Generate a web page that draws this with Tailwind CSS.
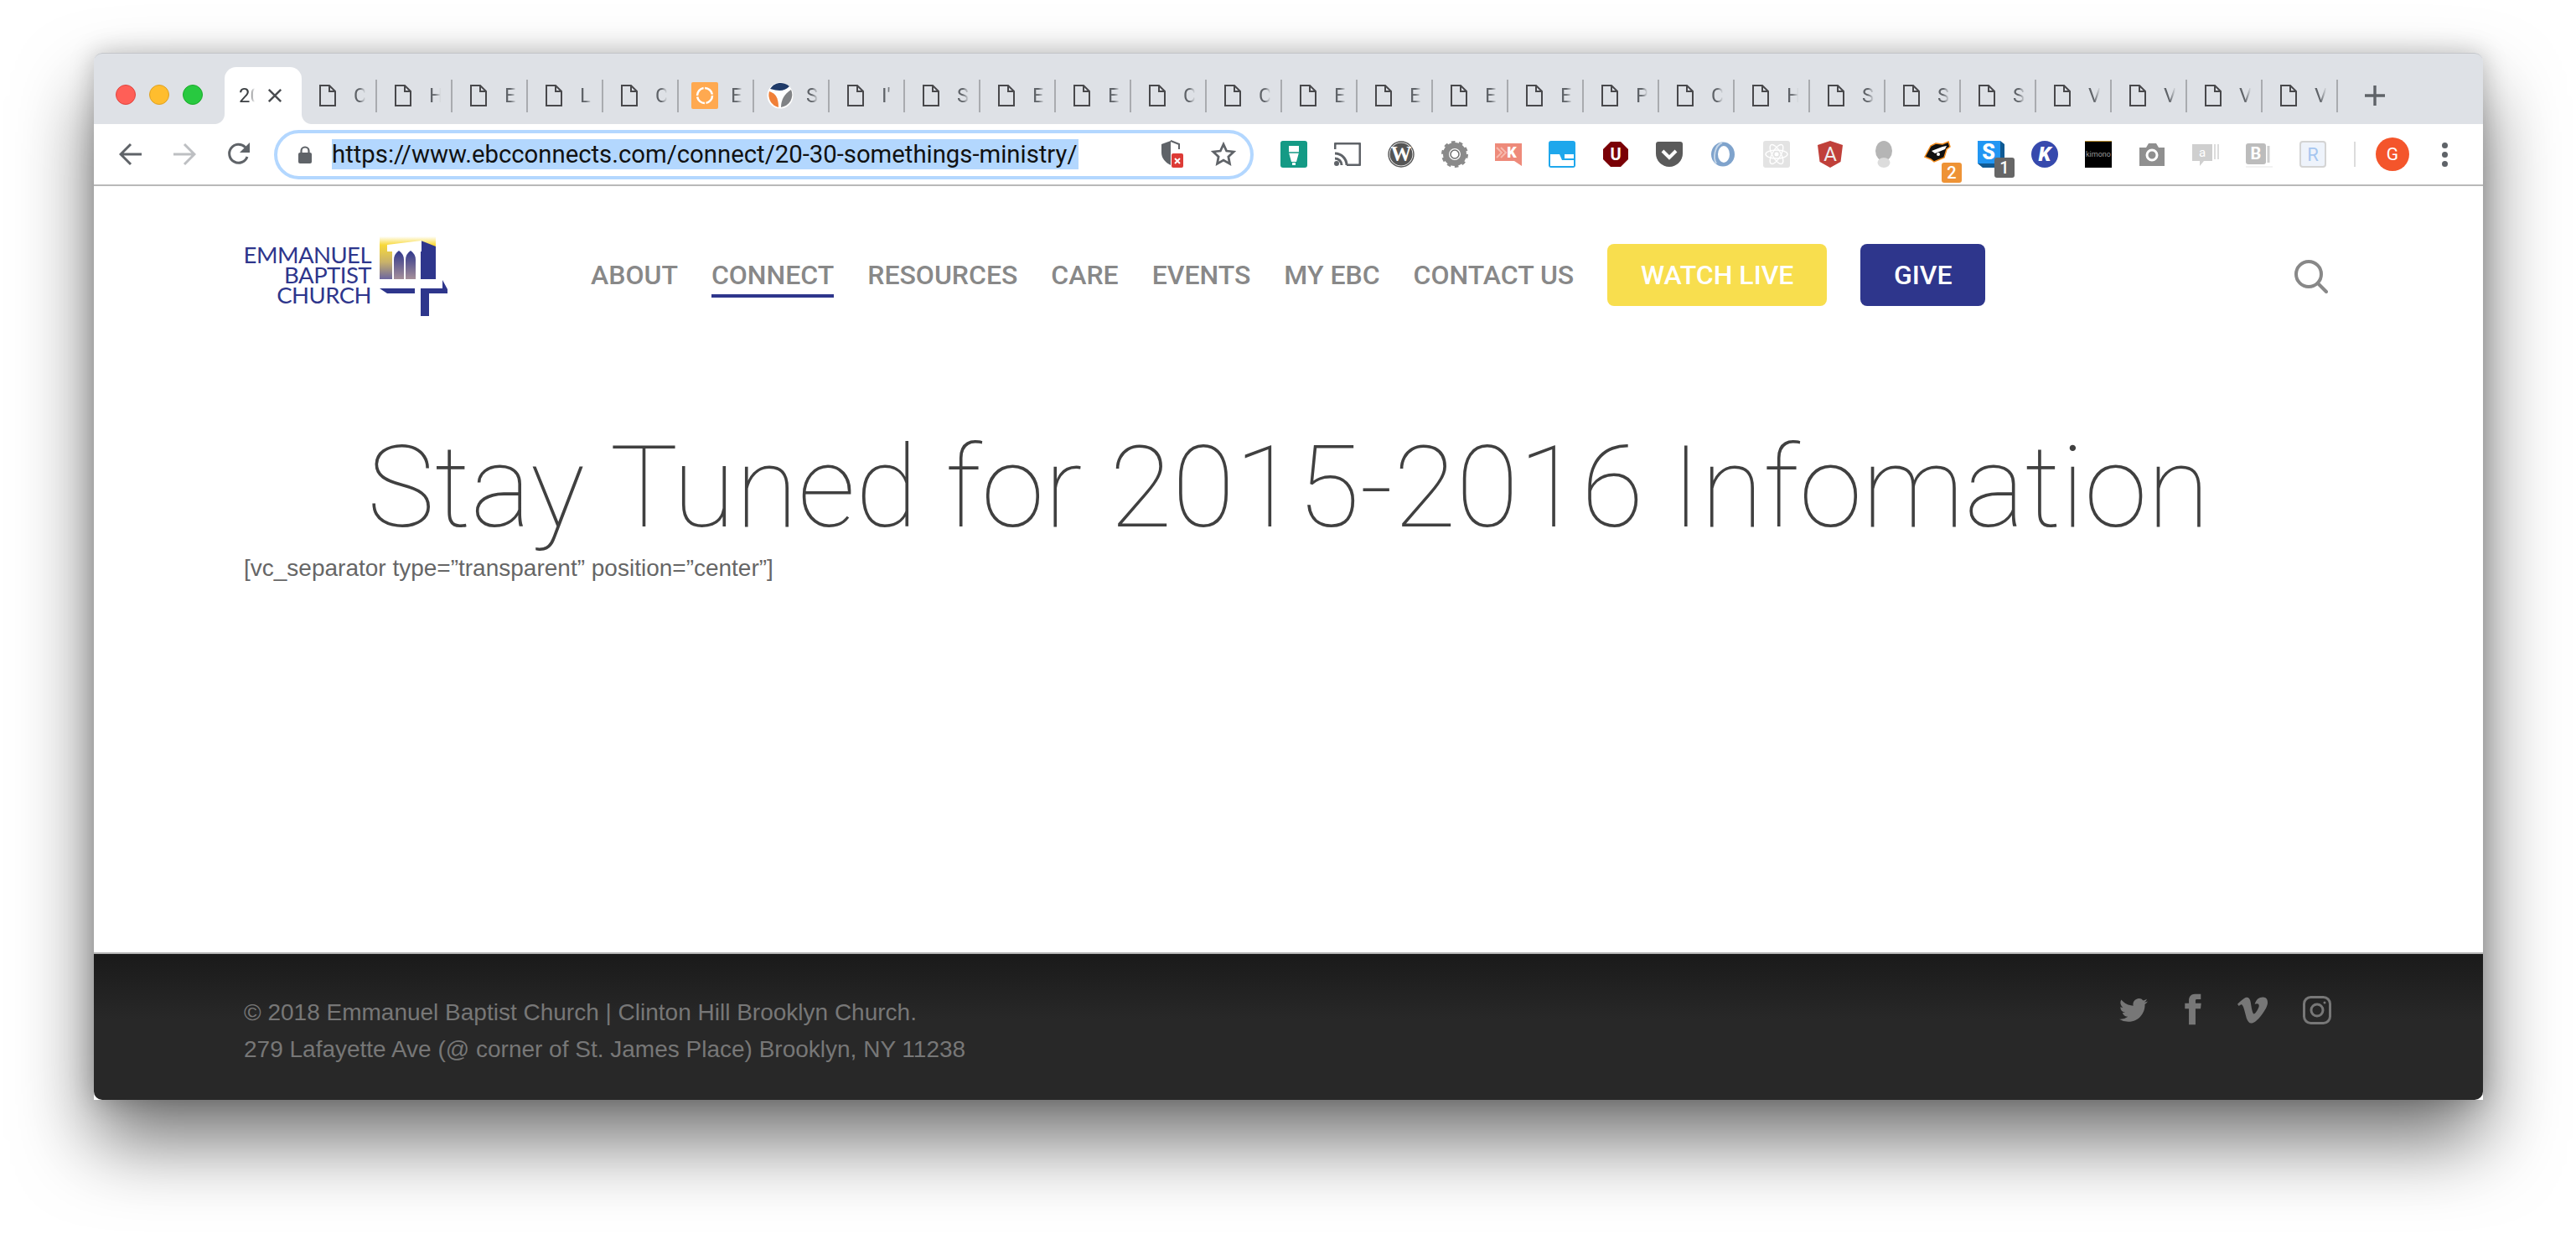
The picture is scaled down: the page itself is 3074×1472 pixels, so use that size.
<!DOCTYPE html>
<html lang="en">
<head>
  <meta charset="UTF-8">
  <title>20-30 Somethings Ministry</title>
  <script src="https://cdn.jsdelivr.net/npm/@tailwindcss/browser@4"></script>
</head>
<body class="bg-white w-[3074px] h-[1472px] overflow-hidden pl-[112px] pt-[63px] font-['Roboto',sans-serif]">

  <div class="w-[2851px] h-[1249px] rounded-[10px] flex flex-col bg-white shadow-[0_50px_90px_rgba(0,0,0,0.55),0_0_30px_rgba(0,0,0,0.22)]">

    <!-- tab strip -->
    <div class="h-[85px] bg-[#dee1e6] rounded-t-[10px] border-t border-[#c4c6ca] flex items-end pl-[26px] shrink-0">
      <div class="flex gap-[16px] self-center mb-[-14px]">
        <span class="w-[24px] h-[24px] rounded-full bg-[#ff5f57] border border-[#e0443e]"></span>
        <span class="w-[24px] h-[24px] rounded-full bg-[#ffbd2e] border border-[#dea123]"></span>
        <span class="w-[24px] h-[24px] rounded-full bg-[#28c940] border border-[#1aab29]"></span>
      </div>
      <div class="relative ml-[26px] w-[92px] h-[68px] bg-white rounded-t-[14px] flex items-center pl-[17px] shrink-0">
        <span class="absolute bottom-0 -left-[12px] w-[12px] h-[12px] bg-[radial-gradient(circle_at_0_0,#dee1e6_11.5px,#fff_12.5px)]"></span>
        <span class="absolute bottom-0 -right-[12px] w-[12px] h-[12px] bg-[radial-gradient(circle_at_100%_0,#dee1e6_11.5px,#fff_12.5px)]"></span>
        <span class="w-[19px] overflow-hidden text-[24px] text-[#3c4043] whitespace-nowrap [mask-image:linear-gradient(90deg,#000_60%,transparent)]">20</span>
        <svg class="ml-[15px]" width="18" height="18" viewBox="0 0 20 20"><path d="M2 2 18 18M18 2 2 18" stroke="#4a4c50" stroke-width="2.8"/></svg>
      </div>
      <div id="tabs" class="flex h-[68px]"></div>
      <svg class="ml-[31px] mb-[21px]" width="26" height="26" viewBox="0 0 26 26"><path d="M13 1v24M1 13h24" stroke="#5f6368" stroke-width="3.4"/></svg>
    </div>

    <!-- toolbar -->
    <div class="h-[74px] bg-white border-b-2 border-[#b9b9b9] flex items-center pl-[30px] shrink-0">
      <svg width="28" height="28" viewBox="0 0 28 28" fill="none" stroke="#5f6368" stroke-width="3"><path d="M27 14H3M14 2 2 14l12 12"/></svg>
      <svg class="ml-[36px]" width="28" height="28" viewBox="0 0 28 28" fill="none" stroke="#bdbfc2" stroke-width="3"><path d="M1 14h24M14 2l12 12-12 12"/></svg>
      <svg class="ml-[36px]" width="30" height="30" viewBox="0 0 30 30" fill="none"><path d="M25 18a11 11 0 1 1-2.5-11.5L26 10" stroke="#5f6368" stroke-width="3"/><path d="M28 1v12H16z" fill="#5f6368"/></svg>
      <div class="ml-[27px] w-[1169px] h-[59px] rounded-full border-[4px] border-[#b3d7ff] flex items-center pl-[25px] pr-[17px] relative">
        <svg width="16" height="21" viewBox="0 0 16 21"><path d="M3.5 9V6a4.5 4.5 0 0 1 9 0v3" fill="none" stroke="#5f6368" stroke-width="2.2"/><rect y="8" width="16" height="13" rx="2" fill="#5f6368"/></svg>
        <span class="ml-[24px] h-[36px] leading-[36px] bg-[#b3d7fe] text-[#111] text-[29.3px] whitespace-nowrap w-[891px]">https://www.ebcconnects.com/connect/20-30-somethings-ministry/</span>
        <svg class="ml-auto" width="28" height="34" viewBox="0 0 28 34"><path d="M12 1 1 5v10c0 7 5 12 11 15z" fill="#5f6368"/><path d="M12 1l10 4v6" fill="none" stroke="#5f6368" stroke-width="2"/><rect x="13" y="16" width="14" height="17" rx="2" fill="#dd3b36"/><path d="M17 22l6 6M23 22l-6 6" stroke="#fff" stroke-width="2"/></svg>
        <svg class="ml-[32px]" width="30" height="30" viewBox="0 0 24 24" fill="none" stroke="#5f6368" stroke-width="2.2"><path d="M12 2.5l2.9 6.3 6.8.8-5 4.7 1.3 6.8-6-3.4-6 3.4 1.3-6.8-5-4.7 6.8-.8z"/></svg>
      </div>

      <div class="ml-[16px] flex items-center">
        <span class="w-[64px] flex justify-center"><svg width="32" height="32" viewBox="0 0 32 32"><rect width="32" height="32" rx="3" fill="#149a85"/><path d="M10 6h12v8l-3 11h-6l-3-11z" fill="#fff"/><rect x="14" y="26" width="4" height="3" fill="#fff"/><path d="M10 14h12" stroke="#149a85" stroke-width="1.5"/></svg></span>
        <span class="w-[64px] flex justify-center"><svg width="32" height="28" viewBox="0 0 32 28" fill="none" stroke="#5f6368" stroke-width="3"><path d="M1 8V3a2 2 0 0 1 2-2h26a2 2 0 0 1 2 2v22a2 2 0 0 1-2 2H15"/><path d="M1 13a14 14 0 0 1 14 14M1 19a8 8 0 0 1 8 8"/><circle cx="3" cy="25" r="1.5" fill="#5f6368"/></svg></span>
        <span class="w-[64px] flex justify-center"><svg width="32" height="32" viewBox="0 0 32 32"><circle cx="16" cy="16" r="15" fill="#fff" stroke="#555" stroke-width="1.4"/><circle cx="16" cy="16" r="13.5" fill="#555"/><text x="16" y="24" text-anchor="middle" font-family="Liberation Serif" font-size="25" font-weight="700" fill="#fff">W</text></svg></span>
        <span class="w-[64px] flex justify-center"><svg width="32" height="32" viewBox="0 0 32 32"><circle cx="16" cy="16" r="10.5" fill="none" stroke="#8a8a8a" stroke-width="7"/><circle cx="16" cy="16" r="14" fill="none" stroke="#8a8a8a" stroke-width="4" stroke-dasharray="4.4 4.4"/><circle cx="16" cy="16" r="5" fill="none" stroke="#6c6c6c" stroke-width="1.5"/></svg></span>
        <span class="w-[64px] flex justify-center"><svg width="32" height="32" viewBox="0 0 32 32"><path d="M0 3h32v27l-9-6H0z" fill="#ee8a7a"/><path d="M2 8l6 6-6 6M7 8l6 6-6 6" fill="none" stroke="#f7b9ae" stroke-width="2"/><text x="20" y="20" text-anchor="middle" font-family="Roboto" font-size="18" font-weight="900" fill="#fff">K</text></svg></span>
        <span class="w-[64px] flex justify-center"><svg width="32" height="32" viewBox="0 0 32 32"><rect width="32" height="32" rx="3" fill="#1ea7ec"/><path d="M2 16h11l3 7h14v7H2z" fill="#fff"/><path d="M19 16h11v5H19z" fill="#fff"/></svg></span>
        <span class="w-[64px] flex justify-center"><svg width="32" height="32" viewBox="0 0 32 32"><path d="M10 1h12l9 9v12l-9 9H10l-9-9V10z" fill="#7a0006"/><text x="16" y="23" text-anchor="middle" font-family="Roboto" font-size="20" font-weight="700" fill="#fff">U</text></svg></span>
        <span class="w-[64px] flex justify-center"><svg width="32" height="30" viewBox="0 0 32 30"><path d="M0 3a3 3 0 0 1 3-3h26a3 3 0 0 1 3 3v11a16 16 0 0 1-32 0z" fill="#5a5a5a"/><path d="M8 11l8 8 8-8" fill="none" stroke="#fff" stroke-width="4"/></svg></span>
        <span class="w-[64px] flex justify-center"><svg width="32" height="32" viewBox="0 0 32 32"><ellipse cx="16" cy="16" rx="14" ry="14.5" fill="#7fa3cc"/><ellipse cx="17" cy="16" rx="7" ry="10" fill="#fff"/><path d="M8 27C4 20 6 6 15 2" fill="none" stroke="#c3d5e8" stroke-width="2"/></svg></span>
        <span class="w-[64px] flex justify-center"><svg width="32" height="32" viewBox="0 0 32 32"><rect width="32" height="32" rx="3" fill="#e3e3e3"/><g fill="none" stroke="#fff" stroke-width="1.4"><ellipse cx="16" cy="16" rx="13" ry="5"/><ellipse cx="16" cy="16" rx="13" ry="5" transform="rotate(60 16 16)"/><ellipse cx="16" cy="16" rx="13" ry="5" transform="rotate(120 16 16)"/></g><circle cx="16" cy="16" r="2.5" fill="#fff"/></svg></span>
        <span class="w-[64px] flex justify-center"><svg width="30" height="32" viewBox="0 0 30 32"><path d="M15 0 30 5l-2.5 20L15 32 2.500 25 0 5z" fill="#c0403a"/><text x="15" y="24" text-anchor="middle" font-family="Roboto" font-size="24" fill="#eee">A</text></svg></span>
        <span class="w-[64px] flex justify-center"><svg width="20" height="32" viewBox="0 0 20 32"><ellipse cx="10" cy="12" rx="10" ry="12" fill="#b5b5b5"/><ellipse cx="10" cy="26" rx="7.500" ry="6" fill="#dcdcdc"/></svg></span>
        <span class="w-[64px] flex justify-center relative"><svg class="mt-[-6px]" width="32" height="26" viewBox="0 0 32 26"><path d="M1 19 8 6l6-3 8 1 7-3 2 6-4 3-3 10-12 5-4-3z" fill="#111" stroke="#f28c1e" stroke-width="1.5"/><path d="M9 12 22 7l5-1-2 4-12 5z" fill="#fff"/><circle cx="17" cy="16" r="2" fill="#fff"/></svg><span class="absolute left-[37px] top-[20px] w-[24px] h-[24px] rounded-[3px] bg-[#ee9336] text-white text-[20px] leading-[24px] text-center font-medium">2</span></span>
        <span class="w-[64px] flex justify-center relative"><svg width="32" height="32" viewBox="0 0 32 32"><rect width="27" height="27" fill="#2196f3"/><path d="M27 0l5 4v28H6L0 27h27z" fill="#0f5a94"/><text x="13" y="22" text-anchor="middle" font-family="Roboto" font-size="25" font-weight="900" fill="#fff">S</text></svg><span class="absolute left-[36px] top-[20px] w-[24px] h-[24px] rounded-[3px] bg-[#666] text-white text-[20px] leading-[24px] text-center font-medium">1</span></span>
        <span class="w-[64px] flex justify-center"><span class="w-[32px] h-[32px] rounded-full bg-[#3649ad] text-white text-[24px] leading-[32px] text-center font-black italic">K</span></span>
        <span class="w-[64px] flex justify-center"><span class="w-[32px] h-[32px] bg-black border-t border-[#b58a2a] text-[#999] text-[9px] leading-[30px] text-center">kimono</span></span>
        <span class="w-[64px] flex justify-center"><svg width="30" height="28" viewBox="0 0 30 28"><path d="M0 6h8l3-5h9l3 5h7v22H0z" fill="#8f8f8f"/><circle cx="15" cy="15" r="6" fill="none" stroke="#fff" stroke-width="3"/></svg></span>
        <span class="w-[64px] flex justify-center"><svg width="32" height="30" viewBox="0 0 32 30"><path d="M0 3h24v20H14l-5 6v-6H0z" fill="#cfcfcf"/><path d="M27 3v18M31 3v18" stroke="#dcdcdc" stroke-width="2"/><text x="12" y="18" text-anchor="middle" font-family="Roboto" font-size="15" fill="#fff">a</text></svg></span>
        <span class="w-[64px] flex justify-center"><svg width="32" height="32" viewBox="0 0 32 32"><rect y="30" width="32" height="2" fill="#f2f2f2"/><rect y="3" width="24" height="25" rx="3" fill="#bcbcbc"/><path d="M27 6v20" stroke="#cfcfcf" stroke-width="3"/><text x="12" y="22" text-anchor="middle" font-family="Roboto" font-size="20" font-weight="700" fill="#fff">B</text></svg></span>
        <span class="w-[64px] flex justify-center"><svg width="32" height="32" viewBox="0 0 32 32"><rect x="1" y="1" width="30" height="30" rx="3" fill="#eef3fb" stroke="#d4d4d4" stroke-width="2"/><text x="16" y="24" text-anchor="middle" font-family="Roboto" font-size="22" fill="#a6c6f0">R</text></svg></span>
        <span class="ml-[17px] w-[2px] h-[30px] bg-[#dcdcdc]"></span>
        <span class="ml-[24px] w-[40px] h-[40px] rounded-full bg-[#f4552b] text-white text-[21px] leading-[40px] text-center">G</span>
        <span class="ml-[39px] flex flex-col gap-[4px]">
          <span class="w-[7px] h-[7px] rounded-full bg-[#5f6368]"></span>
          <span class="w-[7px] h-[7px] rounded-full bg-[#5f6368]"></span>
          <span class="w-[7px] h-[7px] rounded-full bg-[#5f6368]"></span>
        </span>
      </div>
    </div>

    <!-- page -->
    <div class="flex-1 flex flex-col bg-white">
      <header class="h-[215px] px-[179px] flex items-center shrink-0">
        <a class="flex w-[244px] shrink-0">
          <div class="w-[152px] mt-[10px] flex flex-col items-end text-[#2e368c] font-['Lato',sans-serif] text-[27.5px] leading-[24px] tracking-[-0.55px]">
            <span>EMMANUEL</span>
            <span>BAPTIST</span>
            <span>CHURCH</span>
          </div>
          <svg class="ml-[10px]" width="82" height="96" viewBox="0 0 82 96">
            <defs>
              <linearGradient id="sky" x1="0" y1="0" x2="0" y2="1"><stop offset="0" stop-color="#fff"/><stop offset=".2" stop-color="#f8d93a"/><stop offset=".6" stop-color="#c9b26a"/><stop offset="1" stop-color="#6c66a0"/></linearGradient>
              <linearGradient id="arch" x1="0" y1="0" x2="0" y2="1"><stop offset="0" stop-color="#2e368c"/><stop offset="1" stop-color="#a58f9a"/></linearGradient>
            </defs>
            <rect width="67" height="51" fill="url(#sky)"/>
            <path d="M49 5 67 12V51H49z" fill="#2e368c"/>
            <path d="M9 10 50 5v13H9z" fill="#fff"/>
            <path d="M15 18H49V51H15z" fill="#fff"/>
            <path d="M17 51V28q0-7 6-11 6 4 6 11v23z" fill="url(#arch)"/>
            <path d="M31 51V28q0-7 6-11 6 4 6 11v23z" fill="url(#arch)"/>
            <path d="M0 62H42V68H9z" fill="#2e368c"/>
            <path d="M75 52 81 63V68H59V95H49V62H75z" fill="#2e368c"/>
          </svg>
        </a>
        <nav class="ml-[170px] mb-[4px] flex items-center gap-[40px] text-[32px] font-medium text-[#888] whitespace-nowrap">
          <a>ABOUT</a>
          <a class="relative">CONNECT<span class="absolute left-0 right-0 -bottom-[3px] h-[4px] bg-[#2e368c]"></span></a>
          <a>RESOURCES</a>
          <a>CARE</a>
          <a>EVENTS</a>
          <a>MY EBC</a>
          <a>CONTACT US</a>
          <a class="w-[262px] h-[74px] leading-[74px] text-center rounded-[8px] bg-[#f8de4e] text-white">WATCH LIVE</a>
          <a class="w-[149px] h-[74px] leading-[74px] text-center rounded-[8px] bg-[#2e368c] text-white">GIVE</a>
        </nav>
        <svg class="ml-auto mr-[6px]" width="40" height="40" viewBox="0 0 40 40" fill="none" stroke="#888" stroke-width="4" stroke-linecap="round"><circle cx="17" cy="17" r="15"/><path d="M28 28 38 38"/></svg>
      </header>

      <main class="flex-1 px-[179px]">
        <h1 class="mt-[64px] text-center text-[136.3px] leading-[162px] font-thin text-[#404040] whitespace-nowrap">Stay Tuned for 2015-2016 Infomation</h1>
        <p class="mt-[-5px] font-['Liberation_Sans',sans-serif] text-[28px] leading-[40px] text-[#666]">[vc_separator type=”transparent” position=”center”]</p>
      </main>

      <footer class="h-[176px] border-t-2 border-[#b4b4b4] rounded-b-[10px] bg-[linear-gradient(#1a1a1a,#282828_45%)] px-[179px] pt-[48px] flex justify-between shrink-0">
        <div class="font-['Liberation_Sans',sans-serif] text-[28px] leading-[44px] text-[#777]">
          <p>© 2018 Emmanuel Baptist Church | Clinton Hill Brooklyn Church.</p>
          <p>279 Lafayette Ave (@ corner of St. James Place) Brooklyn, NY 11238</p>
        </div>
        <div class="flex items-start gap-[34px] text-[#777] mr-[2px]">
          <svg class="mt-[2px]" width="34" height="34" viewBox="0 0 24 24" fill="currentColor"><path d="M23.953 4.57a10 10 0 01-2.825.775 4.958 4.958 0 002.163-2.723c-.951.555-2.005.959-3.127 1.184a4.92 4.92 0 00-8.384 4.482C7.69 8.095 4.067 6.13 1.64 3.162a4.822 4.822 0 00-.666 2.475c0 1.71.87 3.213 2.188 4.096a4.904 4.904 0 01-2.228-.616v.06a4.923 4.923 0 003.946 4.827 4.996 4.996 0 01-2.212.085 4.936 4.936 0 004.604 3.417 9.867 9.867 0 01-6.102 2.105c-.39 0-.779-.023-1.17-.067a13.995 13.995 0 007.557 2.209c9.053 0 13.998-7.496 13.998-13.985 0-.21 0-.42-.015-.63A9.935 9.935 0 0024 4.59z"/></svg>
          <svg class="-mt-[1px]" width="38" height="38" viewBox="0 0 24 24" fill="currentColor"><path d="M18.77 7.46H14.5v-1.9c0-.9.6-1.1 1-1.1h3V.5h-4.33C10.24.5 9.5 3.44 9.5 5.32v2.15h-3v4h3v12h5v-12h3.85l.42-4z"/></svg>
          <svg class="ml-[1px] mt-[1px]" width="36" height="36" viewBox="0 0 24 24" fill="currentColor"><path d="M23.977 6.416c-.105 2.338-1.739 5.543-4.894 9.609-3.268 4.247-6.026 6.37-8.29 6.37-1.409 0-2.578-1.294-3.553-3.881L5.322 11.4C4.603 8.816 3.834 7.522 3.01 7.522c-.179 0-.806.378-1.881 1.132L0 7.197c1.185-1.044 2.351-2.084 3.501-3.128C5.08 2.701 6.266 1.984 7.055 1.91c1.867-.18 3.016 1.1 3.447 3.838.465 2.953.789 4.789.971 5.507.539 2.45 1.131 3.674 1.776 3.674.502 0 1.256-.796 2.265-2.385 1.004-1.589 1.54-2.797 1.612-3.628.144-1.371-.395-2.061-1.614-2.061-.574 0-1.167.121-1.777.391 1.186-3.868 3.434-5.757 6.762-5.637 2.473.06 3.628 1.664 3.493 4.797l-.013.01z"/></svg>
          <svg class="ml-[8px] mt-[2px]" width="34" height="34" viewBox="0 0 34 34" fill="none" stroke="currentColor" stroke-width="3"><rect x="1.500" y="1.500" width="31" height="31" rx="8"/><circle cx="17" cy="17" r="7"/><circle cx="26" cy="8" r="1.500" fill="currentColor" stroke="none"/></svg>
        </div>
      </footer>
    </div>
  </div>

  <script>
    const doc = '<svg class="shrink-0" width="20" height="26" viewBox="0 0 20 26" fill="none" stroke="#48484b" stroke-width="2"><path d="M1 1h11l7 7v17H1zM12 1v7h7"/></svg>';
    const orange = '<svg class="shrink-0" width="32" height="32" viewBox="0 0 32 32"><rect width="32" height="32" rx="2" fill="#ffa950"/><circle cx="16" cy="16" r="9" fill="none" stroke="#fff" stroke-width="2.5" stroke-dasharray="12.5 1.6"/></svg>';
    const disc = '<svg class="shrink-0" width="32" height="32" viewBox="0 0 32 32"><circle cx="16" cy="16" r="15.500" fill="#fff"/><path d="M4 8a15 15 0 0 1 23-3C21 11 15 11 4 8z" fill="#1f3a68"/><path d="M3 11c7 2 11 7 11 19A15 15 0 0 1 3 11z" fill="#f08038"/><path d="M29 9a15 15 0 0 1-12 21c0-9 4-16 12-21z" fill="#808285"/></svg>';
    const letters = 'CHELCESISEECCEEEEPCHSSSVVVV'.split('');
    letters[7] = "I'";
    document.getElementById('tabs').innerHTML = letters.map((l, i) => {
      const icon = i === 5 ? orange : i === 6 ? disc : doc;
      return `<div class="w-[90px] h-full relative flex items-center">
        <span class="absolute left-[21px] top-[21px] w-[20px] h-[26px] flex items-center justify-center">${icon}</span>
        <span class="absolute left-[62px] top-[20px] w-[14px] h-[28px] overflow-hidden text-[24px] leading-[28px] text-[#5f6368] whitespace-nowrap [mask-image:linear-gradient(90deg,#000_50%,transparent)]">${l}</span>
        <span class="absolute right-0 top-[15px] w-[2px] h-[39px] bg-[#a9abaf]"></span>
      </div>`;
    }).join('');
  </script>
</body>
</html>
